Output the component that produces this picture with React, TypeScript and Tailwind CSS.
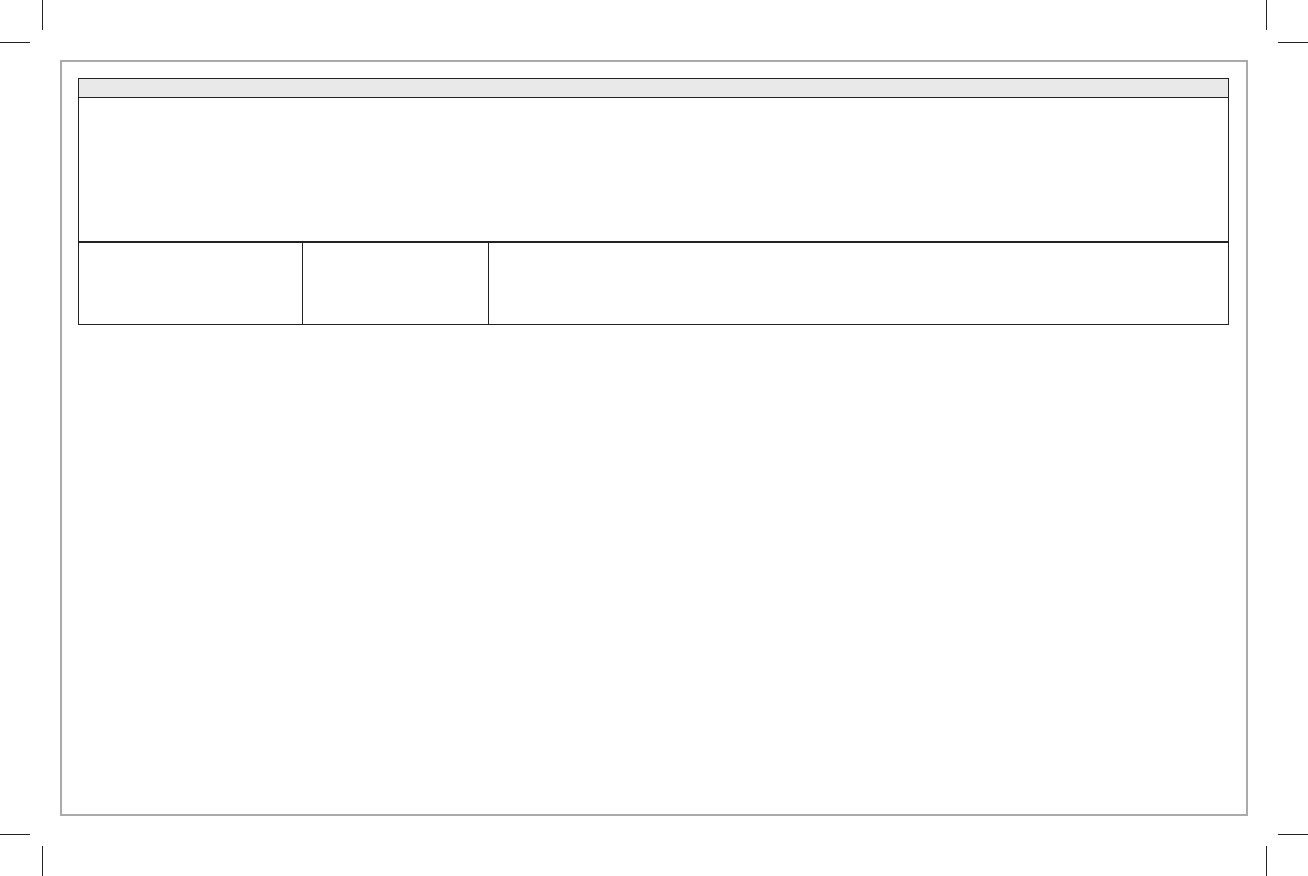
import React from "react";

function MarkRow() {
  return (
    <div className="h-px flex justify-between">
      <div className="w-[30px] bg-[#222]" />
      <div className="w-[30px] bg-[#222]" />
    </div>
  );
}

function MarkBand() {
  return (
    <div className="h-[30px] flex justify-between pl-[42px] pr-[41px]">
      <div className="w-px bg-[#222]" />
      <div className="w-px bg-[#222]" />
    </div>
  );
}

export default function App() {
  return (
    <div
      className="w-[1308px] h-[876px] bg-white overflow-hidden flex flex-col"
      style={{ fontFamily: '"Liberation Sans", Arial, sans-serif' }}
    >
      <MarkBand />
      <div className="h-[12px]" />
      <MarkRow />
      <div className="h-[17px]" />
      <div className="px-[60px]">
        <div className="h-[756px] border-2 border-[#aaaaaa] pt-[16px] pl-[16px]">
          <div className="w-[1151px] border border-[#222] flex flex-col">
            <div className="h-[19px] bg-[#e9e9e9] border-b border-[#222]" />
            <div className="h-[145px] border-b-2 border-[#222]" />
            <div className="h-[81px] flex">
              <div className="w-[224px] border-r border-[#222]" />
              <div className="w-[186px] border-r border-[#222]" />
              <div className="flex-1" />
            </div>
          </div>
        </div>
      </div>
      <div className="h-[18px]" />
      <MarkRow />
      <div className="h-[11px]" />
      <MarkBand />
    </div>
  );
}
